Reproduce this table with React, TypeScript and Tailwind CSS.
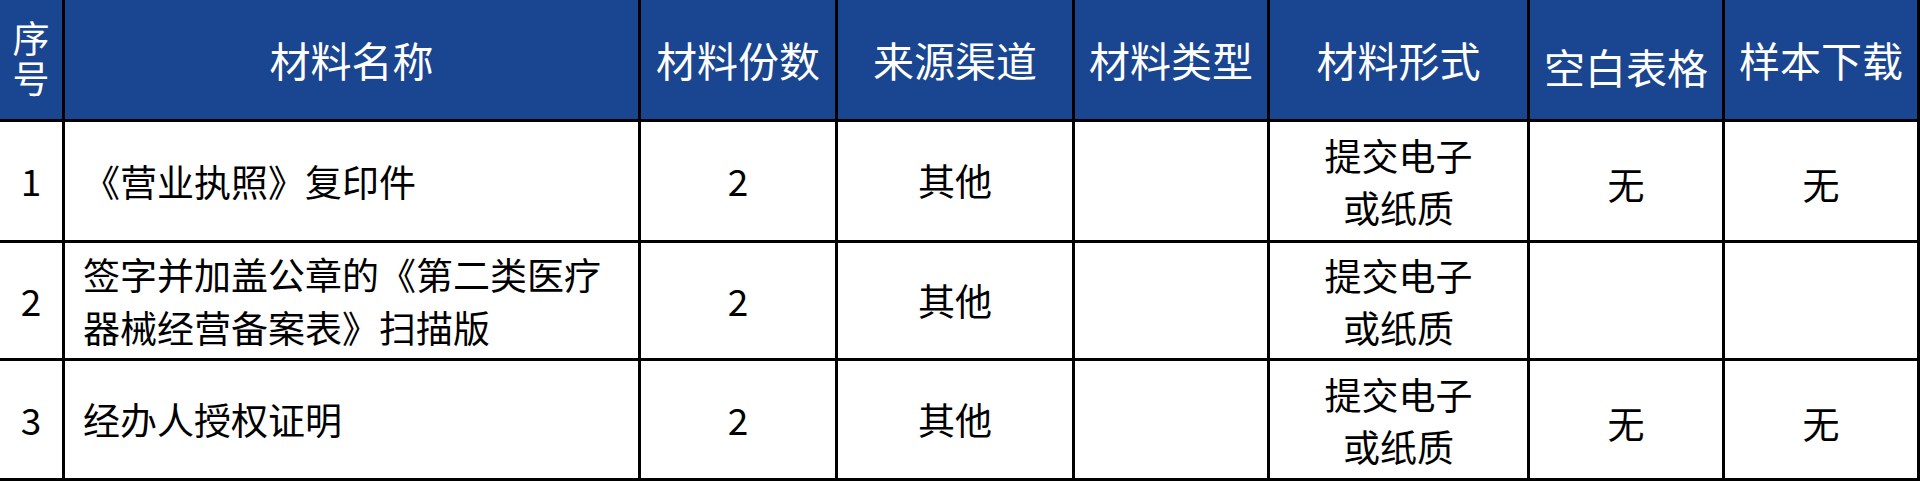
import React from "react";

const font = { fontFamily: '"Noto Sans CJK SC", "Noto Sans", sans-serif' };

const headers = ["材料名称", "材料份数", "来源渠道", "材料类型", "材料形式", "空白表格", "样本下载"];

type Row = { no: string; name: React.ReactNode; count: string; source: string; type: string; blank: string; sample: string };

const rows: Row[] = [
  { no: "1", name: "《营业执照》复印件", count: "2", source: "其他", type: "", blank: "无", sample: "无" },
  {
    no: "2",
    name: (
      <>
        签字并加盖公章的《第二类医疗
        <br />
        器械经营备案表》扫描版
      </>
    ),
    count: "2",
    source: "其他",
    type: "",
    blank: "",
    sample: "",
  },
  { no: "3", name: "经办人授权证明", count: "2", source: "其他", type: "", blank: "无", sample: "无" },
];

const rowH = ["h-[118px]", "h-[115px]", "h-[117px]"];

export default function App() {
  return (
    <div className="w-[1920px] h-[481px] bg-white overflow-hidden" style={font}>
      <div className="grid grid-cols-[62px_573px_194px_234px_192px_257px_192px_192px] grid-rows-[119px_118px_115px_117px] gap-[3px] bg-black pr-[3px] pb-[3px] w-[1920px] h-[481px]">
        <div className="bg-[#1a4590] text-white text-[37px] flex items-center justify-center">
          <span className="[writing-mode:vertical-rl] [text-orientation:upright] tracking-[3px] leading-[40px]">序号</span>
        </div>
        {headers.map((h) => (
          <div
            key={h}
            className={`bg-[#1a4590] text-white text-[41px] flex items-center justify-center ${h === "空白表格" ? "pt-[14px]" : ""}`}
          >
            {h}
          </div>
        ))}
        {rows.map((r, i) => (
          <React.Fragment key={r.no}>
            <div className={`bg-white text-black text-[37px] flex items-center justify-center ${rowH[i]}`}>{r.no}</div>
            <div className="bg-white text-black text-[37px] leading-[53px] flex items-center pl-[18px]">{r.name}</div>
            <div className="bg-white text-black text-[37px] flex items-center justify-center">{r.count}</div>
            <div className="bg-white text-black text-[37px] flex items-center justify-center">{r.source}</div>
            <div className="bg-white text-black text-[37px] flex items-center justify-center">{r.type}</div>
            <div className="bg-white text-black text-[37px] leading-[52px] flex items-center justify-center text-center">
              提交电子
              <br />
              或纸质
            </div>
            <div className="bg-white text-black text-[37px] flex items-center justify-center pt-[8px]">{r.blank}</div>
            <div className="bg-white text-black text-[37px] flex items-center justify-center pt-[8px]">{r.sample}</div>
          </React.Fragment>
        ))}
      </div>
    </div>
  );
}
